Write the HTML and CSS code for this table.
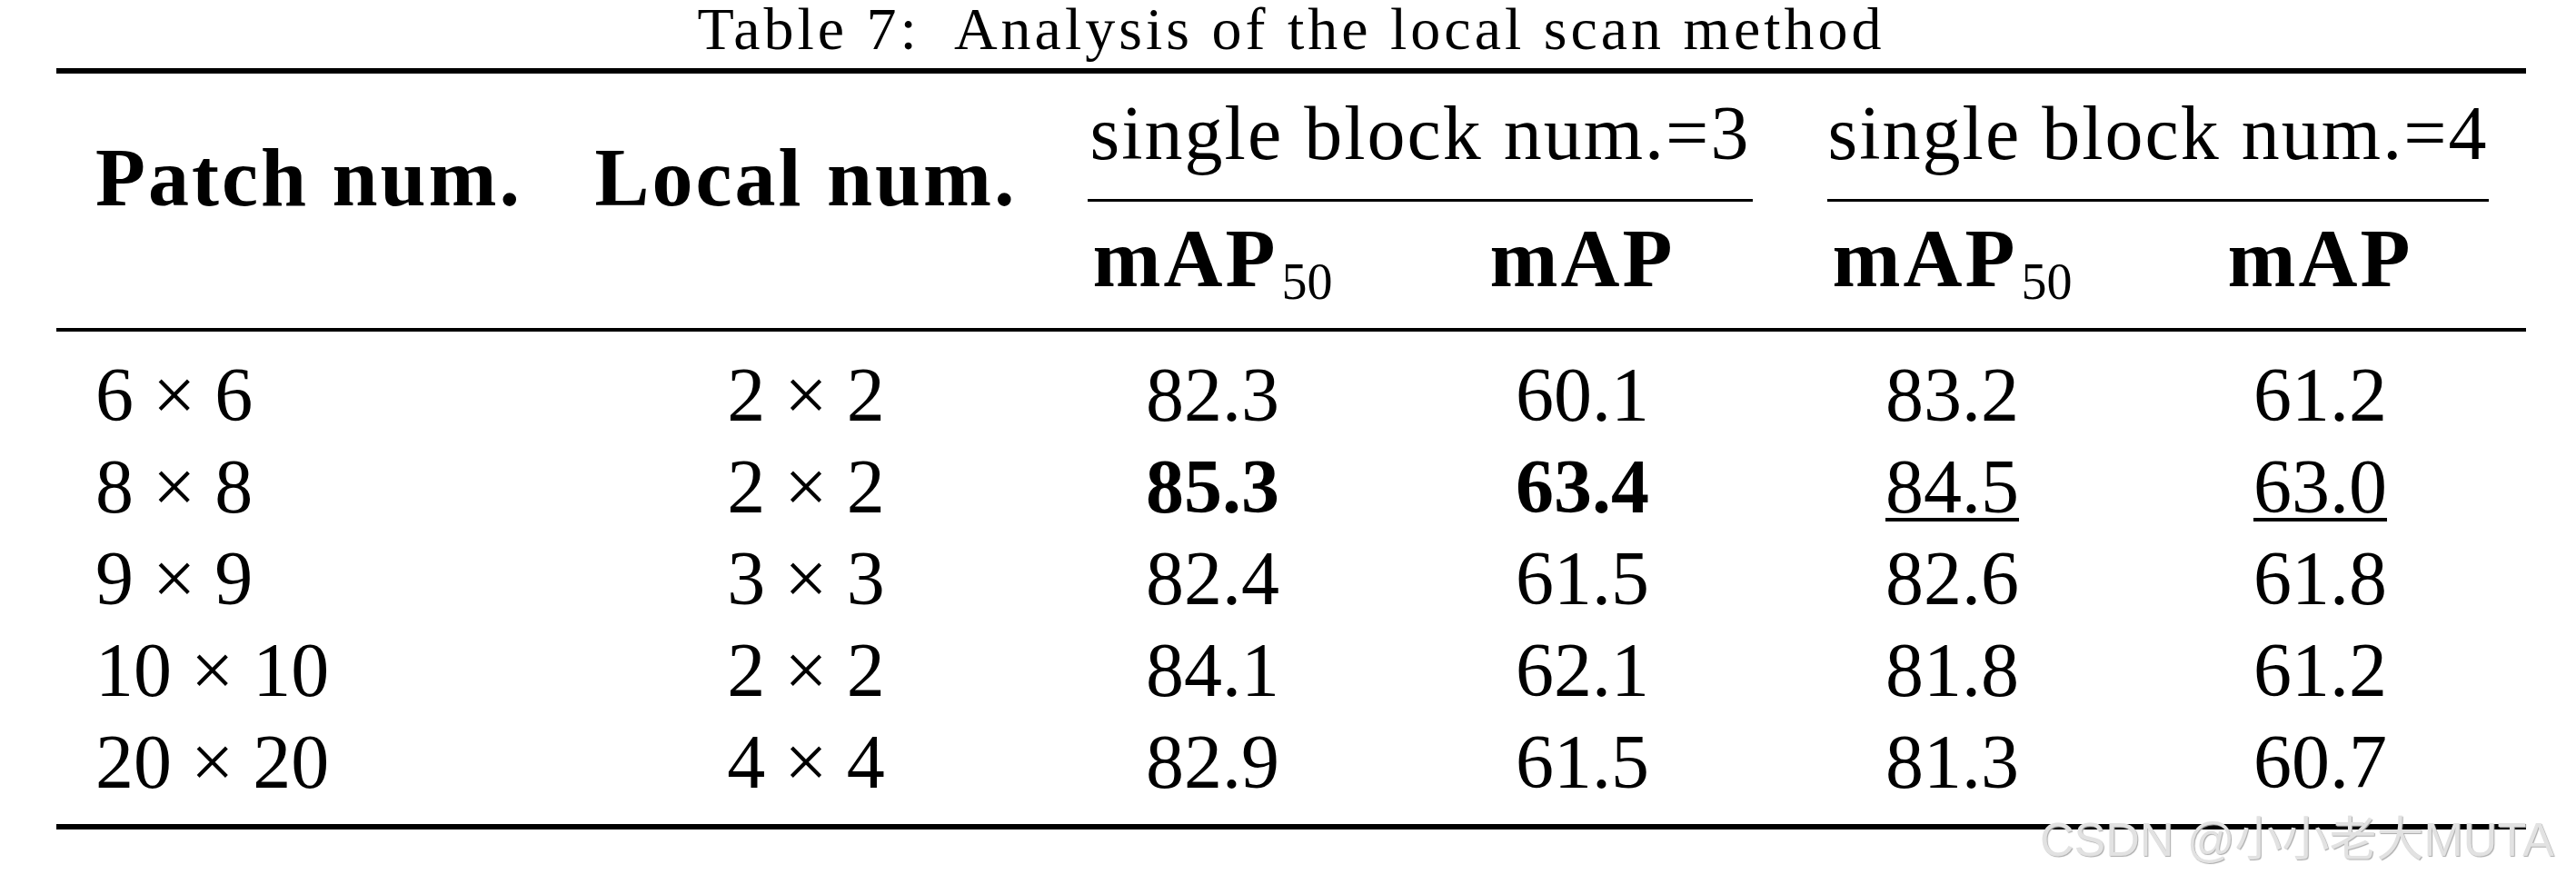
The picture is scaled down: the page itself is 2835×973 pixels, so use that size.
FILE: index.html
```html
<!DOCTYPE html>
<html lang="en">
<head>
  <meta charset="UTF-8">
  <title>Table 7: Analysis of the local scan method</title>
  <link rel="stylesheet" href="styles.css">
</head>
<body>
  <div class="page">
    <p class="caption">Table 7:&ensp;Analysis of the local scan method</p>
    <table class="results">
      <colgroup>
        <col class="col-patch">
        <col class="col-local">
        <col class="col-map50">
        <col class="col-map">
        <col class="col-map50">
        <col class="col-map-last">
      </colgroup>
      <thead>
        <tr>
          <th rowspan="2" class="lead lead-left">Patch num.</th>
          <th rowspan="2" class="lead">Local num.</th>
          <th colspan="2" class="group"><div class="group-label">single block num.=3</div></th>
          <th colspan="2" class="group"><div class="group-label">single block num.=4</div></th>
        </tr>
        <tr>
          <th class="metric">mAP<sub>50</sub></th>
          <th class="metric">mAP</th>
          <th class="metric">mAP<sub>50</sub></th>
          <th class="metric">mAP</th>
        </tr>
      </thead>
      <tbody>
        <tr>
          <td class="size-left">6 × 6</td>
          <td>2 × 2</td>
          <td>82.3</td>
          <td>60.1</td>
          <td>83.2</td>
          <td>61.2</td>
        </tr>
        <tr>
          <td class="size-left">8 × 8</td>
          <td>2 × 2</td>
          <td class="best">85.3</td>
          <td class="best">63.4</td>
          <td><span class="second">84.5</span></td>
          <td><span class="second">63.0</span></td>
        </tr>
        <tr>
          <td class="size-left">9 × 9</td>
          <td>3 × 3</td>
          <td>82.4</td>
          <td>61.5</td>
          <td>82.6</td>
          <td>61.8</td>
        </tr>
        <tr>
          <td class="size-left">10 × 10</td>
          <td>2 × 2</td>
          <td>84.1</td>
          <td>62.1</td>
          <td>81.8</td>
          <td>61.2</td>
        </tr>
        <tr>
          <td class="size-left">20 × 20</td>
          <td>4 × 4</td>
          <td>82.9</td>
          <td>61.5</td>
          <td>81.3</td>
          <td>60.7</td>
        </tr>
      </tbody>
    </table>
    <div class="watermark">CSDN @小小老大MUTA</div>
  </div>
</body>
</html>
```

FILE: styles.css
```css
body {
  margin: 0;
  background: #fff;
  color: #000;
  font-family: "Liberation Serif", "Times New Roman", serif;
}
.page {
  position: relative;
  width: 2835px;
  height: 973px;
}
.caption {
  margin: 0 0 11px 62px;
  width: 2718px;
  text-align: center;
  font-size: 66px;
  line-height: 64px;
  letter-spacing: 4px;
}

/* table: booktabs-like rules */
.results {
  margin-left: 62px;
  width: 2718px;
  table-layout: fixed;
  border-collapse: separate;
  border-spacing: 0;
}
.col-patch { width: 556px; }
.col-local { width: 538px; }
.col-map50 { width: 357px; }
.col-map { width: 457px; }
.col-map-last { width: 453px; }
.results th,
.results td {
  padding: 0;
  vertical-align: top;
}
.lead {
  font-size: 90px;
  line-height: 229px;
  letter-spacing: 3px;
  border-top: 6px solid #000;
  border-bottom: 4px solid #000;
}
.lead-left {
  text-align: left;
  padding-left: 43px !important;
}
.group {
  font-weight: normal;
  border-top: 6px solid #000;
}
.group-label {
  margin: 0 41px;
  font-size: 84px;
  line-height: 131px;
  letter-spacing: 2px;
  padding-bottom: 7px;
  border-bottom: 3px solid #000;
}
.metric {
  font-size: 90px;
  line-height: 125px;
  letter-spacing: 3px;
  padding-bottom: 14px !important;
  border-bottom: 4px solid #000;
}
.metric sub {
  font-size: 56px;
  font-weight: normal;
  letter-spacing: 0;
  line-height: 0;
  vertical-align: -14px;
  margin-left: 4px;
}
.results td {
  font-size: 84px;
  line-height: 101px;
  text-align: center;
}
.results tbody tr:first-child td { padding-top: 19px; }
.results tbody tr:last-child td {
  padding-bottom: 18px;
  border-bottom: 6px solid #000;
}
.results td.size-left {
  text-align: left;
  padding-left: 43px;
}
.best { font-weight: bold; }
.second {
  text-decoration: underline;
  text-decoration-thickness: 4px;
  text-underline-offset: 6px;
}

/* CSDN watermark over the bottom rule */
.watermark {
  position: absolute;
  right: 24px;
  top: 898px;
  font-family: "Liberation Sans", "Noto Sans CJK SC", sans-serif;
  font-size: 52px;
  line-height: 52px;
  color: #e2e2e2;
  text-shadow: 1px 1px 1px #aaa;
}
```
